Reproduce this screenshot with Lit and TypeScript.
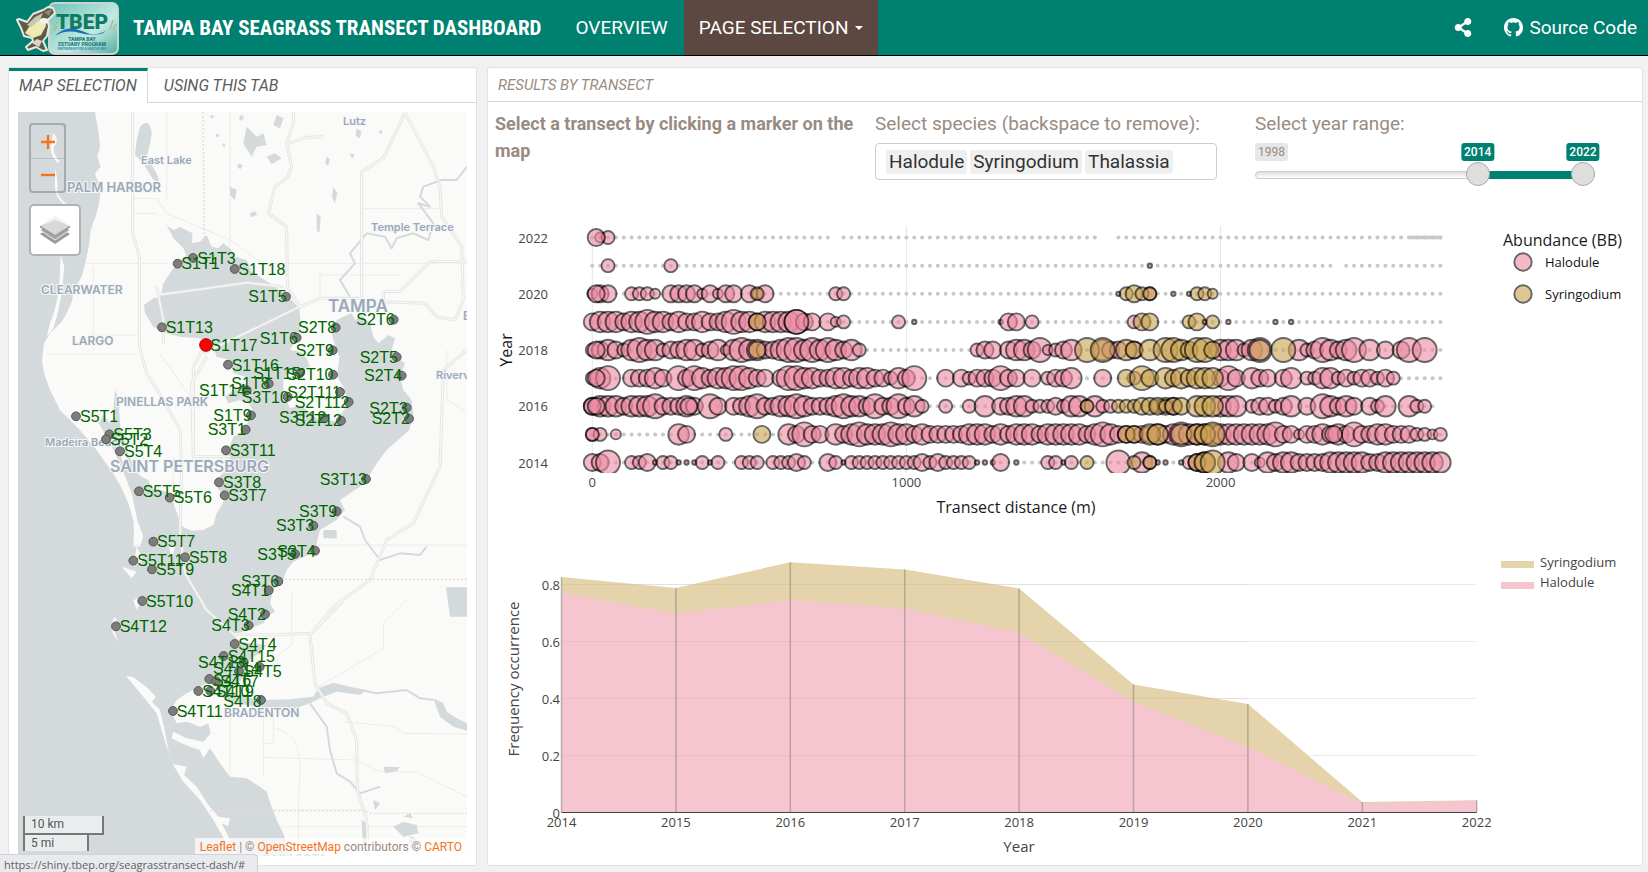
import { LitElement, html, svg, css } from "lit";
import { customElement, state } from "lit/decorators.js";

/* ---------- Map data (three units per CSS pixel) ---------- */

type Site = [name: string, cx: number, cy: number, labelX: number, labelY: number];

const SITES: Site[] = [
  ["S1T3", 579, 774, 595, 774], ["S1T1", 533, 791, 547, 790], ["S1T18", 704, 807, 718, 808],
  ["S1T5", 858, 890, 748, 889], ["S1T13", 486, 982, 500, 982], ["S1T17", 618, 1035, 634, 1036],
  ["S1T6", 890, 1013, 782, 1013], ["S2T8", 1007, 983, 897, 982], ["S2T6", 1181, 959, 1072, 958],
  ["S2T9", 998, 1051, 890, 1051], ["S2T5", 1190, 1071, 1082, 1071], ["S2T4", 1205, 1127, 1095, 1126],
  ["S2T3", 1220, 1223, 1111, 1223], ["S2T2", 1227, 1256, 1118, 1255], ["S1T16", 684, 1094, 698, 1094],
  ["S1T15", 900, 1119, 763, 1118], ["S2T10", 999, 1124, 862, 1123], ["S2T111", 1020, 1176, 865, 1176],
  ["S2T112", 1046, 1206, 887, 1207], ["S1T8", 806, 1151, 697, 1150], ["S1T14", 740, 1171, 600, 1171],
  ["S3T10", 863, 1190, 728, 1190], ["S1T9", 753, 1246, 643, 1246], ["S3T1", 737, 1289, 626, 1288],
  ["S3T12", 973, 1255, 840, 1251], ["S2T12", 1023, 1262, 887, 1261], ["S3T11", 678, 1351, 692, 1351],
  ["S5T1", 228, 1249, 243, 1249], ["S5T3", 328, 1303, 343, 1303], ["S5T2", 318, 1318, 333, 1318],
  ["S5T4", 360, 1354, 375, 1354], ["S5T5", 417, 1474, 431, 1474], ["S5T6", 509, 1493, 524, 1492],
  ["S3T8", 657, 1447, 672, 1447], ["S3T7", 674, 1486, 688, 1486], ["S3T13", 1098, 1437, 962, 1438],
  ["S3T9", 1010, 1534, 900, 1534], ["S3T3", 940, 1577, 831, 1575], ["S3T4", 945, 1652, 835, 1652],
  ["S3T5", 885, 1662, 775, 1663], ["S5T7", 460, 1625, 474, 1624], ["S5T8", 555, 1672, 570, 1672],
  ["S5T11", 400, 1682, 415, 1681], ["S5T9", 456, 1708, 471, 1708], ["S3T6", 835, 1744, 726, 1743],
  ["S4T1", 806, 1771, 696, 1771], ["S5T10", 427, 1803, 441, 1803], ["S4T2", 795, 1843, 686, 1843],
  ["S4T3", 746, 1876, 637, 1876], ["S4T12", 348, 1879, 362, 1879], ["S4T4", 704, 1932, 718, 1932],
  ["S4T15", 671, 1968, 686, 1969], ["S4T13", 731, 1987, 597, 1987], ["S4T14", 717, 2014, 642, 2003],
  ["S4T5", 779, 2001, 733, 2013], ["S4T6", 628, 2037, 642, 2040], ["S4T7", 648, 2044, 664, 2044],
  ["S4T10", 595, 2073, 610, 2073], ["S4T9", 631, 2073, 650, 2073], ["S4T8", 783, 2100, 673, 2102],
  ["S4T11", 519, 2133, 533, 2133],
];

const PLACES: [string, number, number, number][] = [
  ["Lutz", 343, 125, 11], ["East Lake", 141, 164, 11], ["PALM HARBOR", 67, 192, 13],
  ["Temple Terrace", 371, 231, 11], ["CLEARWATER", 41, 294, 12], ["TAMPA", 328, 312, 17],
  ["LARGO", 72, 345, 12], ["PINELLAS PARK", 116, 406, 12], ["Madeira Beach", 45, 446, 11],
  ["SAINT PETERSBURG", 110, 472, 16], ["BRADENTON", 224, 717, 12], ["Riverview", 436, 379, 11],
  ["Brandon", 463, 320, 12], ["SARASOTA", 262, 863, 12],
];

const WATER = [
  "M54 336H285L296 400 300 440 292 470 302 500 285 520 303 570 297 610 290 640 272 690 268 730 258 780 245 830 222 870 215 905 200 940 185 965 150 1000 132 1030 126 1080 132 1120 150 1170 180 1230 200 1250 235 1285 290 1350 318 1390 340 1420 365 1465 385 1510 400 1560 402 1600 400 1640 420 1640 430 1610 412 1560 395 1480 370 1415 345 1360 320 1310 296 1270 310 1245 330 1270 345 1250 358 1240 362 1290 375 1310 380 1350 395 1385 400 1410 425 1430 445 1440 455 1465 485 1470 505 1480 520 1510 535 1550 548 1580 575 1592 610 1590 640 1575 650 1540 668 1510 680 1480 655 1470 650 1440 668 1420 690 1400 685 1350 700 1310 735 1295 745 1260 765 1240 745 1210 720 1200 685 1210 675 1190 700 1170 740 1150 735 1130 700 1120 690 1080 650 1070 640 1040 600 1015 540 1010 500 1000 460 980 435 940 432 915 460 895 482 890 490 850 530 790 560 770 550 745 520 715 500 675 520 690 540 682 578 700 575 730 600 725 620 705 635 740 655 745 670 730 690 745 705 770 740 780 755 815 810 850 850 880 875 900 898 925 902 970 895 1010 870 1050 900 1055 920 1075 930 1100 865 1120 850 1140 850 1180 870 1225 900 1215 930 1240 960 1262 1010 1262 1045 1210 1030 1160 1012 1130 1018 1070 1000 1020 993 990 1010 960 1030 950 1055 940 1065 960 1085 945 1110 970 1120 1010 1135 1030 1165 1005 1185 1015 1175 1050 1195 1075 1215 1090 1200 1130 1210 1170 1235 1200 1240 1240 1228 1290 1205 1310 1160 1350 1130 1390 1095 1450 1020 1500 1035 1530 1010 1560 960 1590 945 1650 925 1665 880 1685 860 1710 850 1740 820 1770 810 1810 825 1835 800 1850 790 1870 740 1890 700 1905 720 1925 800 1935 780 1960 760 1970 745 1990 740 2020 715 2050 690 2060 700 2085 780 2100 870 2098 940 2090 955 2065 1000 2048 1050 2060 1100 2070 1080 2085 1010 2075 970 2090 930 2110 880 2128 780 2120 700 2110 655 2085 650 2055 620 2050 560 2080 530 2100 512 2130 530 2170 560 2165 600 2180 625 2170 632 2200 610 2225 560 2215 520 2195 515 2215 545 2230 570 2240 600 2250 610 2275 630 2245 660 2290 690 2330 740 2335 780 2360 800 2375 815 2420 830 2460 850 2500 870 2571H54Z",
  "M420 380Q450 350 455 400Q450 440 440 470L470 520L478 545L460 540L430 490L405 465L410 420Z",
  "M1338 1762H1401V1850H1350Z",
  "M740 380l30 30 20-10 10 35-30 5-15 30-25-40zM830 345l20 10-10 30-20-10zM800 470l25-10 20 15-30 18zM690 560l20 10-5 30-15-15zM1000 560l12 20-8 30-8-20zM950 640l12 10-4 50-8-10zM1070 385l15 10-6 20-12-8zM970 1590h40v25h-40zM345 1170l15 30-5 60-15-30zM650 400l8 4-3 8-8-3zM670 430l7 5-4 7-6-4zM715 490l14 6-8 12-9-6zM630 345l14 3-8 10zM720 345l12 4-6 14-9-6zM750 640l14-6 8 10-20 8zM1050 460l14 4-8 12zM980 470l10 8-6 20-8-10zM1140 390l8 3-5 10-6-4zM1150 2300l50 2-10 12-35 6zM1120 2400l20 10-15 20zM1180 2480l30-15 40 10 5 25-45 10zM1210 2450l20-10 10 15zM1085 2460l15 10v60h-12zM1230 2510l20 5-10 40-15-20z",
];

const LAND = [
  "M160 398Q180 420 162 440Q156 460 180 485L172 488Q150 465 152 440ZM165 505Q175 540 172 575Q180 600 205 615L190 612Q165 590 165 560ZM182 765L193 800L186 870Q178 930 160 985L140 1010L150 970Q170 920 178 860Z",
  "M378 2028L400 2032L440 2062L468 2090L455 2105L480 2130L492 2180L505 2250L520 2290L500 2240L482 2180L470 2140L430 2090Z",
  "M518 2292L560 2300L552 2325L590 2360L625 2415L655 2450L690 2455L684 2478L665 2470L690 2520L715 2571L680 2530L640 2460L600 2400L550 2345Z",
  "M343 1850L352 1862L342 1890L355 1926L338 1900L336 1870ZM400 1800L430 1790L410 1830ZM365 1700L410 1715L395 1735L380 1718ZM350 1315L372 1345L390 1410L372 1395L355 1350ZM410 1640L430 1680L400 1700ZM505 1630L525 1640L515 1680Z",
];

const ROADS = [
  "M398 336V700L418 770V1040L440 1120L490 1200L540 1290L545 1400L540 1600L555 1720L620 1830L700 1902L830 1905L935 1900",
  "M880 336L880 370L860 430L875 500L860 535L825 560L805 640L860 680L862 860L900 920L960 895L1085 895L1085 515L1150 475L1215 338L1300 500L1320 560L1325 650L1385 740L1390 900L1365 960L1310 950L1275 910L1150 905L1150 875L1200 875L1290 785H1401",
  "M1030 1800L930 1905L945 2050L980 2110L1040 2140L1070 2220L1072 2370L1100 2460L1105 2571",
  "M1400 1050L1330 1110L1320 1400L1240 1570L1160 1620L1110 1740L1000 1820L940 1895",
  "M470 860L490 960L490 1030M470 885L600 868L740 848L850 860M610 1060L900 920M620 1070L575 1150L580 1370H690M610 1045L580 1100L580 1360",
  "M970 410L920 412L865 430",
];
const STREETS = [
  "M54 790H500M760 790H1310M400 595H470L500 640L690 720L780 785M400 640H470M690 336V740M500 336V600M1085 625H1320M960 890V820M960 825H1200M280 800V1050M280 1005H410M140 1063H410",
  "M54 1635H1401M480 1062L600 1230M690 1930V2330M790 2110V2230H820V2120M790 2230V2330M820 2183Q900 2200 900 2300L895 2420V2571M790 2272L1070 2280L1140 2315L1250 2316L1401 2390M1030 2165L1185 2180L1210 2200L1401 2202M940 2070L1150 1945V1870L1220 1800M875 1780V1935L835 1965L830 2000M640 2480H1401M800 2430H1100M1340 1050V1200L1401 1235M520 1370V1600",
];
const RIVERS = "M1401 500L1370 540L1325 540L1270 560L1260 590L1290 620L1255 610L1300 670L1285 720L1240 700L1190 715L1175 745L1155 710L1100 700L1050 760L1065 790L1020 840L1050 890M1030 1550L1080 1580L1095 1620L1140 1680L1200 1660L1260 1665L1280 1640M930 2110L980 2180L990 2250L1010 2320L1050 2345L1080 2380L1140 2360M1080 2070L1130 2080L1220 2070L1260 2095L1300 2100";
const CREEK = "M1300 2095L1330 2110L1340 2135L1370 2155L1401 2170V2192L1360 2180L1320 2150Z";

/* ---------- Transect data: one character per 25 m, ten per group; 0 = not surveyed, . = nothing found ---------- */

const E = "..........";

const HALODULE: Record<number, string[]> = {
  2022: [".23.......", E, E, ".0........", E, E, ".....00...", E, E, E, "....0...."],
  2021: ["..3.......", "3.........", E, E, E, E, E, E, E, ".....0....", "........."],
  2020: ["244..3332.", "444424244.", "424.......", ".33.......", E, E, E, ".3........", E, E, "........."],
  2019: ["4555455655", "4544544565", "545555644.", "423......3", ".1........", "..144.3...", ".........3", E, ".1.....1.1", E, "........."],
  2018: ["3454356553", "4455345256", "5544566565", "65453.....", ".........3", "44.4554623", "45...544.4", E, "555356....", "53465456.5", ".4.46.6.."],
  2017: ["356..44454", ".646545566", "544.466554", "4554554435", "46...4.434", "44644.4.34", "45...4...3", E, "464.544.45", ".335534344", "343......"],
  2016: ["4555455564", "4454.64.44", "5644556544", "4565546446", "453..3..3.", "5.44553334", "3553533...", "..344.....", "555.344345", ".4.65454.4", "35..533.0"],
  2015: ["33.2......", ".54....3..", ".....54644", ".545655565", "5454444455", "5454555455", "5554565444", "4454565555", "5555555644", "2445454644", "554443323"],
  2014: ["446..33413", "3111313..3", "33.33343..", "4313333333", "3343433331", "114.1...33", "13.....6..", "5311..345.", ".54.425455", "4444555554", "455555555"],
};

const SYRINGODIUM: Record<number, string> = {
  2021: "71:1",
  2020: "21:3 67:1 68:3 69:4 70:3 71:3 74:1 76:1 77:3 78:3 79:2",
  2019: "21:4 70:4 71:4 76:3 77:4 78:1 79:3",
  2018: "21:4 63:6 65:6 68:5 69:4 71:5 73:6 74:6 75:5 76:4 77:6 78:6 79:4 85:5 88:6",
  2017: "68:4 70:6 71:4 73:5 74:4 75:5 76:4 77:5 78:5 79:5",
  2016: "63:3 67:3 68:3 69:3 70:4 71:4 72:4 73:3 74:4 75:4 77:5 78:5 79:5",
  2015: "21.6:4 68:4 69:4 71:5 72:5 75:5 77:5 78:5 79:6",
  2014: "63:3 69:3 71:3 75:1 77:4 78:5 79:6",
};

const BETWEEN: [year: number, step: number, size: number][] = [
  [2022, 0.5, 4], [2020, 0.5, 4], [2019, 26, 6], [2018, 0.5, 4], [2017, 0.5, 4],
  [2016, 0, 4], [2016, 0.5, 4], [2016, 12.3, 4], [2015, 0, 3], [2015, 94.4, 4],
];

const RADIUS = [0, 2.2, 5, 6.5, 8.5, 10.3, 12];
const YEARS = [2014, 2015, 2016, 2017, 2018, 2019, 2020, 2021, 2022];
const xDist = (m: number) => 592.3 + m * 0.3141;
const yYear = (y: number) => 462.5 - (y - 2014) * 28.12;

const TOTAL = [0.826, 0.788, 0.878, 0.853, 0.786, 0.449, 0.381, 0.037, 0.043];
const HALO = [0.772, 0.698, 0.746, 0.716, 0.631, 0.389, 0.23, 0.031, 0.042];
const xYear = (i: number) => 561.5 + i * 114.4;
const yFreq = (v: number) => 812.5 - v * 285;

@customElement("transect-map")
class TransectMap extends LitElement {
  static styles = css`
    :host { display: block; position: relative; overflow: hidden; font-family: Roboto, sans-serif; background: #d4dadc; }
    .canvas { position: absolute; inset: 0; width: 100%; height: 100%; display: block; }
    .land { fill: #fafaf8; }
    .water { fill: #d4dadc; }
    .road { fill: none; stroke: #e3e3e1; stroke-width: 9; stroke-linejoin: round; }
    .road.core { stroke: #f7f7f5; stroke-width: 4; }
    .street { fill: none; stroke: #ebebe9; stroke-width: 3; }
    .river { fill: none; stroke: #d4dadc; stroke-width: 6; stroke-linejoin: round; }
    .border { fill: none; stroke: #f0d4d6; stroke-width: 4; stroke-dasharray: 6 6; }
    .place { font-family: Inter, sans-serif; font-weight: 600; fill: #9ba9b9; stroke: #f6f7f7; stroke-width: 2; paint-order: stroke; }
    .site { fill: #7d7d7d; stroke: #555; stroke-width: 1; }
    .site.active { fill: #f00; stroke: #a00; }
    .code { font: 16px "Liberation Sans", Arial, sans-serif; fill: #006400; }
    .tools { position: absolute; left: 11px; top: 11px; display: grid; gap: 11px; justify-items: start; }
    .zoom { display: grid; border: 2px solid rgba(0, 0, 0, .22); border-radius: 4px; }
    .zoom button { width: 33px; height: 33px; border: 0; padding: 0; background: transparent; color: #f4731c; display: grid; place-items: center; }
    .zoom button + button { border-top: 1px solid rgba(0, 0, 0, .12); }
    .layers { width: 52px; height: 52px; padding: 0; border: 2px solid rgba(0, 0, 0, .3); border-radius: 5px; background: #fff; display: grid; place-items: center; }
    .scale { position: absolute; left: 5px; bottom: 5px; font-size: 12px; line-height: 16px; color: #555; display: grid; justify-items: start; }
    .bar { border: 2px solid #777; border-top: 0; background: rgba(255, 255, 255, .5); box-sizing: border-box; padding-left: 6px; height: 19px; }
    .km { width: 81px; }
    .mi { width: 66px; border-top: 2px solid #777; border-bottom: 0; margin-top: -2px; height: 18px; }
    .credit { position: absolute; right: 0; bottom: 0; padding: 0 5px; font-size: 12px; line-height: 18px; color: #998b81; background: rgba(255, 255, 255, .7); white-space: nowrap; }
    .credit a { color: #f4731c; text-decoration: none; }
  `;

  render() {
    return html`
      <svg class="canvas" viewBox="18 112 449 745" preserveAspectRatio="xMidYMin slice" role="img" aria-label="Transect map">
        <g transform="scale(.33333)">
          <rect class="land" x="0" y="300" width="1500" height="2400"></rect>
          ${STREETS.map((d) => svg`<path class="street" d=${d}></path>`)}
          ${WATER.map((d) => svg`<path class="water" d=${d}></path>`)}
          ${LAND.map((d) => svg`<path class="land" d=${d}></path>`)}
          <path class="river" d=${RIVERS}></path>
          <path class="water" d=${CREEK}></path>
          ${ROADS.map((d) => svg`<path class="road" d=${d}></path>`)}
          ${ROADS.map((d) => svg`<path class="road core" d=${d}></path>`)}
          <path class="border" d="M609 336L613 730M855 1738H1401M630 2432H1090L1110 2440H1401"></path>
        </g>
        ${PLACES.map(([t, x, y, s]) => svg`<text class="place" x=${x} y=${y} font-size=${s}>${t}</text>`)}
        ${SITES.map(([n, cx, cy]) => svg`<circle class=${n === "S1T17" ? "site active" : "site"} cx=${cx / 3} cy=${cy / 3} r=${n === "S1T17" ? 6.3 : 4.4}></circle>`)}
        ${SITES.map(([n, , , lx, ly]) => svg`<text class="code" x=${lx / 3 - 1} y=${ly / 3 + 6}>${n}</text>`)}
      </svg>
      <div class="tools">
        <div class="zoom">
          <button aria-label="Zoom in"><svg width="14" height="14" viewBox="0 0 14 14" stroke="currentColor" stroke-width="2.4"><path d="M0 7H14M7 0V14"></path></svg></button>
          <button aria-label="Zoom out"><svg width="14" height="14" viewBox="0 0 14 14" stroke="currentColor" stroke-width="2.4"><path d="M0 7H14"></path></svg></button>
        </div>
        <button class="layers" aria-label="Layers">
          <svg width="30" height="30" viewBox="0 0 30 30">
            <path d="M0 19L15 10L30 19L15 29Z" fill="#9a9a9a"></path>
            <path d="M0 15L15 6L30 15L15 25Z" fill="#a4a4a4" stroke="#fff" stroke-width=".8"></path>
            <path d="M0 11L15 1L30 11L15 21Z" fill="#d8d8d8" stroke="#fff" stroke-width=".8"></path>
            <path d="M0 11L15 1L30 11L15 5Z" fill="#f2f2f2"></path>
            <path d="M0 10.500L15 20L30 10.500V12.500L15 22L0 12.500Z" fill="#9c9c9c"></path>
          </svg>
        </button>
      </div>
      <div class="scale"><div class="bar km">10 km</div><div class="bar mi">5 mi</div></div>
      <div class="credit"><a href="#">Leaflet</a> | © <a href="#">OpenStreetMap</a> contributors © <a href="#">CARTO</a></div>
    `;
  }
}

@customElement("bubble-chart")
class BubbleChart extends LitElement {
  static styles = css`
    :host { display: block; font-family: "Open Sans", sans-serif; }
    svg { display: block; width: 100%; height: auto; }
    .grid { stroke: #e6e6e6; }
    .dot { fill: #c8c8c8; }
    .bubble { stroke: #000; stroke-width: 1.9; opacity: .6; }
    .halodule { fill: #ed8aa3; }
    .syringodium { fill: #caa24e; }
    .tick { font-size: 13px; fill: #444; }
    .title { font-size: 16px; fill: #1a1a1a; }
    .legend { font-size: 13px; fill: #111; }
  `;

  private stations<T>(draw: (year: number, step: number, mark: string) => T) {
    return YEARS.flatMap((y) => [...HALODULE[y].join("")].map((mark, k) => draw(y, k, mark)));
  }

  private bubble(kind: string, y: number, k: number, size: number) {
    return svg`<circle class="bubble ${kind}" cx=${xDist(k * 25)} cy=${yYear(y)} r=${RADIUS[size]}></circle>`;
  }

  private syringodium() {
    return Object.entries(SYRINGODIUM).flatMap(([y, list]) => list.split(" ").map((e) => {
      const [k, s] = e.split(":").map(Number);
      return this.bubble("syringodium", +y, k, s);
    }));
  }

  render() {
    return html`
      <svg viewBox="488 208 1154 316" role="img" aria-label="Abundance by year and distance">
        <clipPath id="plot"><rect x="560" y="226" width="900" height="247"></rect></clipPath>
        ${[0, 1000, 2000].map((m) => svg`<line class="grid" x1=${xDist(m)} x2=${xDist(m)} y1="226" y2="473"></line>`)}
        <g clip-path="url(#plot)">
          ${this.stations((y, k, c) => (c === "0" ? null : svg`<circle class="dot" cx=${xDist(k * 25)} cy=${yYear(y)} r="2"></circle>`))}
          ${[...Array(13).keys()].map((i) => svg`<circle class="dot" cx=${xDist(2600 + i * 8.33)} cy=${yYear(2022)} r="2"></circle>`)}
          ${this.stations((y, k, c) => (+c > 0 ? this.bubble("halodule", y, k, +c) : null))}
          ${BETWEEN.map(([y, k, s]) => this.bubble("halodule", y, k, s))}
          ${this.syringodium()}
        </g>
        ${[2014, 2016, 2018, 2020, 2022].map((y) => svg`<text class="tick" x="548" y=${yYear(y) + 5} text-anchor="end">${y}</text>`)}
        ${[0, 1000, 2000].map((m) => svg`<text class="tick" x=${xDist(m)} y="487" text-anchor="middle">${m}</text>`)}
        <text class="title" x="1016" y="513" text-anchor="middle">Transect distance (m)</text>
        <text class="title" transform="translate(512 350) rotate(-90)" text-anchor="middle">Year</text>
        <text class="title" x="1503" y="246">Abundance (BB)</text>
        <circle class="bubble halodule" cx="1523" cy="262" r="8.700"></circle>
        <circle class="bubble syringodium" cx="1523" cy="294" r="8.700"></circle>
        <text class="legend" x="1545" y="267">Halodule</text>
        <text class="legend" x="1545" y="299">Syringodium</text>
      </svg>
    `;
  }
}

@customElement("frequency-chart")
class FrequencyChart extends LitElement {
  static styles = css`
    :host { display: block; font-family: "Open Sans", sans-serif; }
    svg { display: block; width: 100%; height: auto; }
    .grid { stroke: #ebebeb; }
    .over { stroke: #444; stroke-opacity: .06; }
    .syringodium { fill: #e4d3ab; }
    .halodule { fill: #f5c6d0; }
    .year { stroke: #7d7d7d; stroke-opacity: .5; stroke-width: 1.5; }
    .axis { stroke: #444; }
    .tick { font-size: 13px; fill: #444; }
    .title { font-size: 15px; fill: #444; }
  `;

  private area(values: number[]) {
    return `M${xYear(0)} ${yFreq(0)}` + values.map((v, i) => `L${xYear(i)} ${yFreq(v)}`).join("") + `L${xYear(8)} ${yFreq(0)}Z`;
  }

  render() {
    const ticks = [0.2, 0.4, 0.6, 0.8];
    return html`
      <svg viewBox="488 524 1154 341" role="img" aria-label="Frequency occurrence by year">
        ${ticks.map((v) => svg`<line class="grid" x1=${xYear(0)} x2=${xYear(8)} y1=${yFreq(v)} y2=${yFreq(v)}></line>`)}
        <path class="syringodium" d=${this.area(TOTAL)}></path>
        <path class="halodule" d=${this.area(HALO)}></path>
        ${ticks.map((v) => svg`<line class="over" x1=${xYear(0)} x2=${xYear(6)} y1=${yFreq(v)} y2=${yFreq(v)}></line>`)}
        ${TOTAL.map((v, i) => svg`<line class="year" x1=${xYear(i)} x2=${xYear(i)} y1=${yFreq(v)} y2=${yFreq(0)}></line>`)}
        <line class="axis" x1=${xYear(0)} x2=${xYear(8)} y1="812.500" y2="812.500"></line>
        ${[0, ...ticks].map((v) => svg`<text class="tick" x="560" y=${yFreq(v) + 5} text-anchor="end">${v}</text>`)}
        ${YEARS.map((y, i) => svg`<text class="tick" x=${xYear(i)} y="827" text-anchor="middle">${y}</text>`)}
        <text class="title" x="1019" y="852" text-anchor="middle">Year</text>
        <text class="title" transform="translate(519 679) rotate(-90)" text-anchor="middle">Frequency occurrence</text>
        <rect class="syringodium" x="1501" y="561" width="33" height="7"></rect>
        <rect class="halodule" x="1501" y="582" width="33" height="7"></rect>
        <text class="tick" x="1540" y="567">Syringodium</text>
        <text class="tick" x="1540" y="587">Halodule</text>
      </svg>
    `;
  }
}

@customElement("year-range")
class YearRange extends LitElement {
  @state() private from = 2014;
  @state() private to = 2022;

  static styles = css`
    :host { display: block; position: relative; height: 48px; font-family: Roboto, sans-serif; }
    .track { position: absolute; left: 0; right: 0; top: 28px; height: 8px; box-sizing: border-box; border: 1px solid #ccc; border-radius: 8px; background: linear-gradient(#ddd, #fff); }
    .span { position: absolute; top: 28px; height: 8px; background: #008070; }
    input { position: absolute; left: 0; top: 19px; width: 100%; height: 24px; margin: 0; appearance: none; background: transparent; pointer-events: none; }
    input::-webkit-slider-thumb { appearance: none; pointer-events: auto; box-sizing: border-box; width: 24px; height: 24px; border: 1px solid #ababab; border-radius: 50%; background: #dedede; }
    .tag { position: absolute; top: 0; font-size: 12px; line-height: 14px; padding: 2px 3px; border-radius: 3px; color: #fff; font-weight: 500; background: #008070; transform: translateX(-50%); }
    .min { left: 0; transform: none; background: #e6e6e6; color: #998b81; font-weight: 400; }
  `;

  private at(year: number) {
    const t = (year - 1998) / 24;
    return `calc(12px + (100% - 24px) * ${t})`;
  }

  render() {
    return html`
      <span class="tag min">1998</span>
      <div class="track"></div>
      <div class="span" style="left: ${this.at(this.from)}; width: calc((100% - 24px) * ${(this.to - this.from) / 24})"></div>
      <input type="range" aria-label="First year" min="1998" max="2022" .value=${String(this.from)}
        @input=${(e: Event) => (this.from = Math.min(+(e.target as HTMLInputElement).value, this.to))}>
      <input type="range" aria-label="Last year" min="1998" max="2022" .value=${String(this.to)}
        @input=${(e: Event) => (this.to = Math.max(+(e.target as HTMLInputElement).value, this.from))}>
      <span class="tag" style="left: ${this.at(this.from)}">${this.from}</span>
      <span class="tag" style="left: ${this.at(this.to)}">${this.to}</span>
    `;
  }
}

@customElement("app-root")
class AppRoot extends LitElement {
  static styles = css`
    :host { display: flex; flex-direction: column; min-height: 100vh; box-sizing: border-box; background: #f1f1f1; font-family: Roboto, sans-serif; color: #998b81; }
    .bar { display: flex; align-items: stretch; height: 55px; background: #008070; border-bottom: 1px solid #000; color: #fff; padding: 0 11px 0 16px; }
    .bar a { color: #fff; text-decoration: none; }
    .brand { display: flex; align-items: center; gap: 13px; margin-right: 18px; }
    .brand h1 { margin: 0; font-family: "Roboto Condensed", Roboto, sans-serif; font-size: 21px; font-weight: 700; white-space: nowrap; }
    .nav { display: flex; font-size: 19px; }
    .nav a, .nav button { display: flex; align-items: center; gap: 6px; padding: 0 16px; border: 0; font: inherit; color: #fff; background: none; }
    .nav button { padding: 0 15px; background: #5c4741; }
    .caret { width: 0; border: 4px solid transparent; border-top-color: #fff; border-bottom: 0; }
    .side { margin-left: auto; gap: 32px; }
    .side a { padding: 0; }
    .page { flex: 1; display: grid; grid-template-columns: minmax(0, 469fr) minmax(0, 1156fr); gap: 10px; padding: 11px 5px 6px 8px; }
    .card { display: flex; flex-direction: column; box-sizing: border-box; border: 1px solid #e1e1e1; border-radius: 3px; background: #fff; }
    .tabs { display: flex; height: 35px; font-size: 16px; font-style: italic; }
    .tab { font: inherit; border: 0; border-bottom: 1px solid #d6d6d6; background: none; color: #5c5c5c; padding: 0 16px; }
    .tab.on { border-top: 3px solid #008070; border-right: 1px solid #d6d6d6; border-bottom: 0; padding: 0 10px 4px; }
    .rest { flex: 1; border-bottom: 1px solid #d6d6d6; }
    transect-map { flex: 1; margin: 9px; }
    .head { margin: 0; height: 34px; line-height: 35px; padding-left: 10px; border-bottom: 1px solid #d6d6d6; font-size: 15px; font-style: italic; font-weight: 400; box-sizing: border-box; }
    .controls { display: grid; grid-template-columns: 380px 342px 340px; justify-content: start; box-sizing: border-box; height: 106px; padding: 8px 7px 0; font-size: 19px; line-height: 27px; }
    .controls p { margin: 0; font-size: 18px; font-weight: 700; }
    .label { display: block; margin-bottom: 6px; }
    .year { margin-left: 38px; margin-right: -38px; }
    .box { display: flex; align-items: center; gap: 3px; box-sizing: border-box; height: 37px; border: 1px solid #ccc; border-radius: 4px; padding: 0 10px; color: #333; line-height: 24px; }
    .item { background: #efefef; border-radius: 3px; padding: 0 3px; }
    .box input { flex: 1; min-width: 0; border: 0; outline: 0; font: inherit; background: none; }
    .status { position: fixed; left: 0; bottom: 0; height: 17px; padding: 0 12px 0 4px; border: 1px solid #d0d2d6; border-left: 0; border-bottom: 0; border-radius: 0 4px 0 0; background: #e8eaed; color: #5f6368; font: 11px/19px "Open Sans", sans-serif; overflow: hidden; }
  `;

  private logo() {
    return html`<svg width="104" height="55" viewBox="0 0 104 55" role="img" aria-label="Tampa Bay Estuary Program">
      <defs><linearGradient id="sea" x2="1" y2="1"><stop stop-color="#6fc2b4"></stop><stop offset=".6" stop-color="#c4e9e2"></stop><stop offset="1" stop-color="#4fae9f"></stop></linearGradient></defs>
      <rect x="33" y="3" width="69" height="51" rx="6" fill="url(#sea)" stroke="#c9d3d0" stroke-width="2"></rect>
      <path d="M1 20L3 19L11 22L17 14L27 10L32 7L37 8L39 13L34 18L31 20L33 26L31 36L27 41L31 50L27 51L20 47L12 50L10 47L17 41L16 38L8 36L5 28Z" fill="#5f5b45" stroke="#e9e9e2" stroke-width="2" stroke-linejoin="round"></path>
      <path d="M9 33L13 27L20 20L29 18L30 26L25 35L17 38Z" fill="#efe9b4"></path>
      <path d="M11 25L19 17L27 13L24 20L15 27Z" fill="#c9c7b4"></path>
      <path d="M24 21a4 3 0 1 0 8 0a4 3 0 1 0-8 0z" fill="#f4f2ea"></path>
      <path d="M28 12L36 9L33 16Z" fill="#8d8a78"></path><path d="M16 43l7 4 3-6-5-2z" fill="#d8d6c8"></path>
      <path d="M37 30l4-8M39 31l2-5M94 30l3-10M97 30l3-6" stroke="#a9b98a" stroke-width="1.200" fill="none"></path>
      <text x="66" y="29" text-anchor="middle" font-family="Roboto, sans-serif" font-weight="900" font-size="21" fill="#117a63">TBEP</text>
      <path d="M39 36Q50 24 66 31T90 31Q78 37 64 33T39 36Z" fill="#1d6fb8"></path>
      <text x="66" y="41" text-anchor="middle" font-family="Roboto, sans-serif" font-weight="900" font-size="5" fill="#1c7d78">TAMPA BAY</text>
      <text x="66" y="46" text-anchor="middle" font-family="Roboto, sans-serif" font-weight="900" font-size="5" fill="#1c7d78">ESTUARY PROGRAM</text>
      <text x="66" y="50" text-anchor="middle" font-family="Roboto, sans-serif" font-weight="700" font-size="3" fill="#3b83b5">PARTNERSHIP FOR A HEALTHY BAY</text>
    </svg>`;
  }

  render() {
    return html`
      <header class="bar">
        <div class="brand">${this.logo()}<h1>TAMPA BAY SEAGRASS TRANSECT DASHBOARD</h1></div>
        <nav class="nav"><a href="#">OVERVIEW</a><button>PAGE SELECTION<span class="caret"></span></button></nav>
        <nav class="nav side">
          <a href="#" aria-label="Share"><svg width="18" height="19" viewBox="0 0 448 512" fill="currentColor"><path d="M352 320c-22.608 0-43.387 7.819-59.79 20.895l-102.486-64.054a96.551 96.551 0 0 0 0-41.683l102.486-64.054C308.613 184.181 329.392 192 352 192c53.019 0 96-42.981 96-96S405.019 0 352 0s-96 42.981-96 96c0 7.158.79 14.13 2.276 20.841L155.790 180.895C139.387 167.819 118.608 160 96 160c-53.019 0-96 42.981-96 96s42.981 96 96 96c22.608 0 43.387-7.819 59.790-20.895l102.486 64.054A96.301 96.301 0 0 0 256 416c0 53.019 42.981 96 96 96s96-42.981 96-96-42.981-96-96-96z"></path></svg></a>
          <a href="#"><svg width="19" height="19" viewBox="0 0 16 16" fill="currentColor"><path d="M8 0C3.580 0 0 3.580 0 8c0 3.540 2.290 6.530 5.470 7.590.4.070.55-.17.55-.38 0-.19-.01-.82-.01-1.490-2.010.37-2.530-.49-2.690-.94-.09-.23-.48-.94-.82-1.130-.28-.15-.68-.52-.01-.53.63-.01 1.080.58 1.230.82.72 1.210 1.870.87 2.330.66.07-.52.28-.87.51-1.070-1.780-.2-3.640-.89-3.640-3.950 0-.87.31-1.590.82-2.150-.08-.2-.36-1.020.08-2.120 0 0 .67-.21 2.200.82.64-.18 1.320-.27 2-.27s1.360.09 2 .27c1.530-1.040 2.200-.82 2.200-.82.44 1.100.16 1.920.08 2.120.51.56.82 1.270.82 2.150 0 3.070-1.870 3.750-3.650 3.950.29.25.54.73.54 1.480 0 1.070-.01 1.930-.01 2.200 0 .21.15.46.55.38A8.010 8.010 0 0 0 16 8c0-4.420-3.580-8-8-8z"></path></svg>Source Code</a>
        </nav>
      </header>
      <main class="page">
        <section class="card">
          <div class="tabs" role="tablist">
            <button class="tab on" role="tab" aria-selected="true">MAP SELECTION</button>
            <button class="tab" role="tab" aria-selected="false">USING THIS TAB</button>
            <div class="rest"></div>
          </div>
          <transect-map></transect-map>
        </section>
        <section class="card">
          <h2 class="head">RESULTS BY TRANSECT</h2>
          <div class="controls">
            <p>Select a transect by clicking a marker on the map</p>
            <div>
              <label class="label" for="species">Select species (backspace to remove):</label>
              <div class="box"><span class="item">Halodule</span><span class="item">Syringodium</span><span class="item">Thalassia</span><input id="species" type="text"></div>
            </div>
            <div class="year">
              <span class="label">Select year range:</span>
              <year-range></year-range>
            </div>
          </div>
          <bubble-chart></bubble-chart>
          <frequency-chart></frequency-chart>
        </section>
      </main>
      <div class="status">https://shiny.tbep.org/seagrasstransect-dash/#</div>
    `;
  }
}
